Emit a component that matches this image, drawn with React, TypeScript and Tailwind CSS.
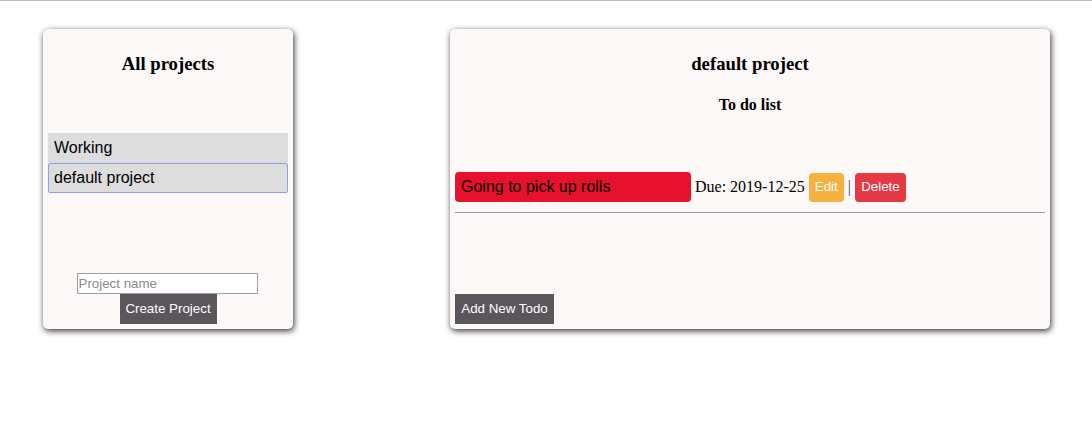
import React from "react";

export default function App() {
  const serif = { fontFamily: '"Liberation Serif", "Times New Roman", serif' };
  return (
    <div className="w-[1092px] h-[433px] bg-white border-t border-[#bcbcbc]" style={{ fontFamily: '"Liberation Sans", Arial, sans-serif' }}>
      <div className="flex items-start pt-[28px] pl-[43px] gap-[157px]">
        {/* Left card */}
        <div className="w-[250px] h-[300px] bg-[#fcf8f8] rounded-[5px] shadow-[1px_2px_6px_rgba(0,0,0,0.8)] flex flex-col">
          <h3 className="mt-[24px] text-center text-[18.72px] leading-[22px] font-bold text-black" style={serif}>
            All projects
          </h3>
          <div className="mt-[58px] mx-[5px] flex flex-col">
            <div className="h-[30px] bg-[#dddddd] pl-[6px] flex items-center text-[16px] text-black">Working</div>
            <div className="h-[30px] bg-[#dddddd] pl-[5px] flex items-center text-[16px] text-black border border-[#8f9cf0] rounded-[2px]">default project</div>
          </div>
          <div className="mt-auto mb-[5px] flex flex-col items-center">
            <input
              placeholder="Project name"
              className="ml-[-2px] w-[181px] h-[21px] border border-[#a0a0a0] bg-white px-[1px] text-[13.33px] text-black placeholder:text-[#8a8a8a] outline-none"
            />
            <button className="h-[30px] w-[97px] bg-[#5a565b] text-white text-[13.33px]">Create Project</button>
          </div>
        </div>

        {/* Right card */}
        <div className="w-[600px] h-[300px] bg-[#fcf8f8] rounded-[5px] shadow-[1px_2px_6px_rgba(0,0,0,0.8)] flex flex-col px-[5px]">
          <h3 className="mt-[24px] text-center text-[18.72px] leading-[22px] font-bold text-black" style={serif}>
            default project
          </h3>
          <h4 className="mt-[20px] text-center text-[16px] leading-[19px] font-bold text-black" style={serif}>
            To do list
          </h4>
          <div className="mt-[58px] flex items-center h-[30px]">
            <div className="w-[236px] h-[30px] bg-[#e8112d] rounded-[4px] pl-[6px] flex items-center text-[16px] text-black">
              Going to pick up rolls
            </div>
            <span className="ml-[4px] text-[16px] text-black" style={serif}>Due: 2019-12-25</span>
            <button className="ml-[4px] h-[29px] w-[35px] rounded-[4px] bg-[#f6b13f] text-white text-[13.33px]">Edit</button>
            <span className="ml-[4px] text-[16px] text-[#2f4f4f]" style={serif}>|</span>
            <button className="ml-[4px] h-[29px] w-[51px] rounded-[4px] bg-[#e63946] text-white text-[13.33px]">Delete</button>
          </div>
          <div className="mt-[10px] border-t border-[#999] h-0"></div>
          <div className="mt-auto mb-[5px]">
            <button className="h-[30px] w-[99px] bg-[#5a565b] text-white text-[13.33px]">Add New Todo</button>
          </div>
        </div>
      </div>
    </div>
  );
}
